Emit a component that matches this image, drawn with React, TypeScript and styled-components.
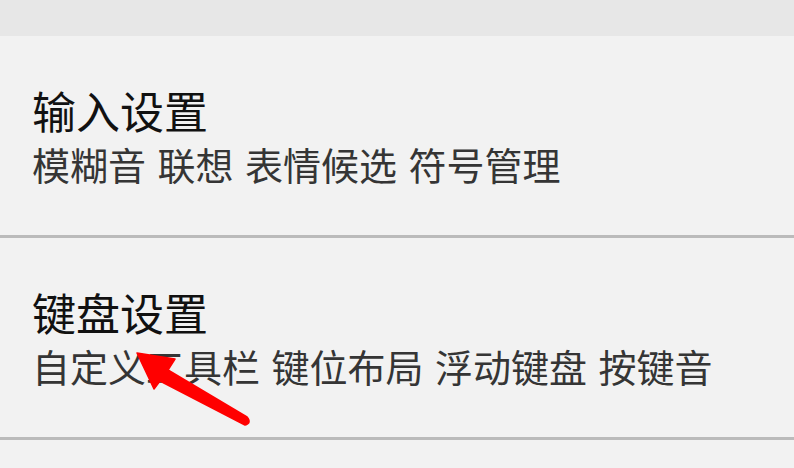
import React from 'react';
import styled, { createGlobalStyle } from 'styled-components';

const GlobalStyle = createGlobalStyle`
    html, body {
        margin: 0;
        padding: 0;
        background: #f2f2f2;
    }
    body {
        font-family: 'Noto Sans CJK SC', 'Noto Sans', sans-serif;
    }
`;

interface SettingItem {
    title: string;
    options: string[];
}

const items: SettingItem[] = [
    { title: '输入设置', options: ['模糊音', '联想', '表情候选', '符号管理'] },
    { title: '键盘设置', options: ['自定义工具栏', '键位布局', '浮动键盘', '按键音'] },
];

const App: React.FC = () => {
    return (
        <>
            <GlobalStyle />
            <Screen>
                <TopBar />
                <List>
                    {items.map((item) => (
                        <Row key={item.title}>
                            <Title>{item.title}</Title>
                            <Options>{item.options.join(' ')}</Options>
                        </Row>
                    ))}
                    <Row $empty />
                </List>
                <PointerArrow viewBox="0 0 794 468" width="794" height="468">
                    <path
                        d="M137 353 L175 359 L168 370 L247 417 Q252 423 245 425 L160 381 L154 389 Z"
                        fill="#ff0000"
                        stroke="#ff0000"
                        strokeWidth="1.5"
                        strokeLinejoin="round"
                    />
                </PointerArrow>
            </Screen>
        </>
    );
};
export default App;

const Screen = styled.div`
    position: relative;
    width: 794px;
    height: 468px;
    overflow: hidden;
    background: #f2f2f2;
`;

const TopBar = styled.div`
    height: 36px;
    background: #e7e7e7;
`;

const List = styled.div`
    display: flex;
    flex-direction: column;
`;

const Row = styled.div<{ $empty?: boolean }>`
    display: flex;
    flex-direction: column;
    justify-content: center;
    height: ${({ $empty }) => ($empty ? '60px' : '199px')};
    padding-left: 32px;
    border-bottom: ${({ $empty }) => ($empty ? 'none' : '3px solid #bbbbbb')};
`;

const Title = styled.div`
    font-size: 44px;
    line-height: 56px;
    color: #111111;
    white-space: nowrap;
`;

const Options = styled.div`
    font-size: 38px;
    line-height: 52px;
    color: #353535;
    white-space: nowrap;
    word-spacing: 3px;
`;

const PointerArrow = styled.svg`
    position: absolute;
    top: 0;
    left: 0;
    pointer-events: none;
`;
